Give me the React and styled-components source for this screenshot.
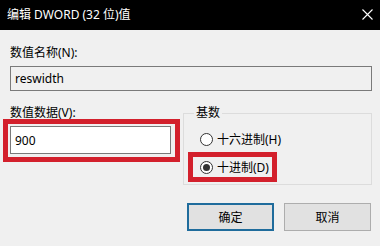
import React, { useState } from 'react'
import styled, { createGlobalStyle } from 'styled-components'

const GlobalStyle = createGlobalStyle`
  html, body {
    margin: 0;
    padding: 0;
    background: #f0f0f0;
  }
  body {
    font-family: "Noto Sans", "Noto Sans CJK SC", sans-serif;
    font-size: 12px;
    color: #000;
  }
`;

const Window = styled.div`
  width: 380px;
  height: 246px;
  display: flex;
  flex-direction: column;
  background: #f0f0f0;
  overflow: hidden;
`;

const TitleBar = styled.div`
  height: 30px;
  flex-shrink: 0;
  background: #000;
  color: #fff;
  display: flex;
  align-items: center;
  justify-content: space-between;
  padding-left: 7px;
`;

const Title = styled.span`
  font-size: 12px;
  line-height: 16px;
  margin-top: -1px;
`;

const CloseButton = styled.div`
  width: 26px;
  height: 30px;
  display: flex;
  align-items: center;
  justify-content: center;
  margin-top: -2px;
`;

const Body = styled.div`
  padding: 15px 8px 0 10px;
  display: flex;
  flex-direction: column;
`;

const Label = styled.div`
  line-height: ${props => props.$lh || 16}px;
  height: ${props => props.$lh || 16}px;
  white-space: nowrap;
`;

const TextBox = styled.div`
  box-sizing: border-box;
  height: ${props => props.$h}px;
  border: 1px solid #7a7a7a;
  background: ${props => props.$readOnly ? '#f0f0f0' : '#fff'};
  display: flex;
  align-items: center;
  padding-left: 4px;
  margin-top: ${props => props.$mt || 0}px;
`;

const Row = styled.div`
  display: grid;
  grid-template-columns: 170px 189px;
  column-gap: 3px;
  margin-top: 15px;
`;

const Column = styled.div`
  display: flex;
  flex-direction: column;
`;

const Highlight = styled.div`
  box-sizing: border-box;
  border: 5px solid #d3202c;
  padding: ${props => props.$pad};
  margin-left: ${props => props.$ml || 0}px;
  width: ${props => props.$w}px;
  margin-top: ${props => props.$mt || 0}px;
`;

const GroupBox = styled.fieldset`
  margin: 0;
  border: 1px solid #dcdcdc;
  padding: 11px 0 2px 4px;
  min-width: 0;
`;

const Legend = styled.legend`
  padding: 0 2px;
  margin-left: 6px;
  line-height: 14px;
  height: 14px;
`;

const RadioRow = styled.label`
  display: flex;
  align-items: center;
  gap: 4px;
  height: ${props => props.$h || 16}px;
  padding-left: ${props => props.$pl || 0}px;
  white-space: nowrap;
`;

const RadioCircle = styled.span`
  box-sizing: border-box;
  width: 13px;
  height: 13px;
  border-radius: 50%;
  border: 1px solid #333;
  background: #fff;
  display: flex;
  align-items: center;
  justify-content: center;
  flex-shrink: 0;

  &::after {
    content: '';
    width: 7px;
    height: 7px;
    border-radius: 50%;
    background: #333;
    display: ${props => props.$checked ? 'block' : 'none'};
  }
`;

const ButtonRow = styled.div`
  display: flex;
  justify-content: flex-end;
  gap: 10px;
  margin-top: 18px;
  padding-right: 1px;
`;

const Button = styled.button`
  box-sizing: border-box;
  width: 87px;
  height: 28px;
  font-family: inherit;
  font-size: 12px;
  color: #000;
  background: #e1e1e1;
  border: ${props => props.$default ? '2px solid #1f6c9c' : '1px solid #adadad'};
  padding: 0;
  margin: 0;
`;

function Radio({ checked, label, onSelect, pl, h }) {
  return (
    <RadioRow $pl={pl} $h={h} onClick={onSelect}>
      <RadioCircle $checked={checked} />
      <span>{label}</span>
    </RadioRow>
  )
}

function App() {
  const [base, setBase] = useState('dec');

  return (
    <Window>
      <GlobalStyle />
      <TitleBar>
        <Title>编辑 DWORD (32 位)值</Title>
        <CloseButton>
          <svg width="11" height="11" viewBox="0 0 11 11">
            <path d="M0.5 0.5 L10.5 10.5 M10.5 0.5 L0.5 10.5" stroke="#fff" strokeWidth="1.1" />
          </svg>
        </CloseButton>
      </TitleBar>
      <Body>
        <Label>数值名称(N):</Label>
        <TextBox $h={25} $mt={5} $readOnly>reswidth</TextBox>
        <Row>
          <Column>
            <Label $lh={13}>数值数据(V):</Label>
            <Highlight $ml={-7} $w={177} $pad="2px 4px 3px 2px">
              <TextBox $h={28}>900</TextBox>
            </Highlight>
          </Column>
          <GroupBox>
            <Legend>基数</Legend>
            <Radio
              pl={12}
              label="十六进制(H)"
              checked={base === 'hex'}
              onSelect={() => setBase('hex')}
            />
            <Highlight $w={89} $mt={5} $pad="0 0 0 7px">
              <Radio
                h={20}
                label="十进制(D)"
                checked={base === 'dec'}
                onSelect={() => setBase('dec')}
              />
            </Highlight>
          </GroupBox>
        </Row>
        <ButtonRow>
          <Button $default>确定</Button>
          <Button>取消</Button>
        </ButtonRow>
      </Body>
    </Window>
  )
}

export default App
